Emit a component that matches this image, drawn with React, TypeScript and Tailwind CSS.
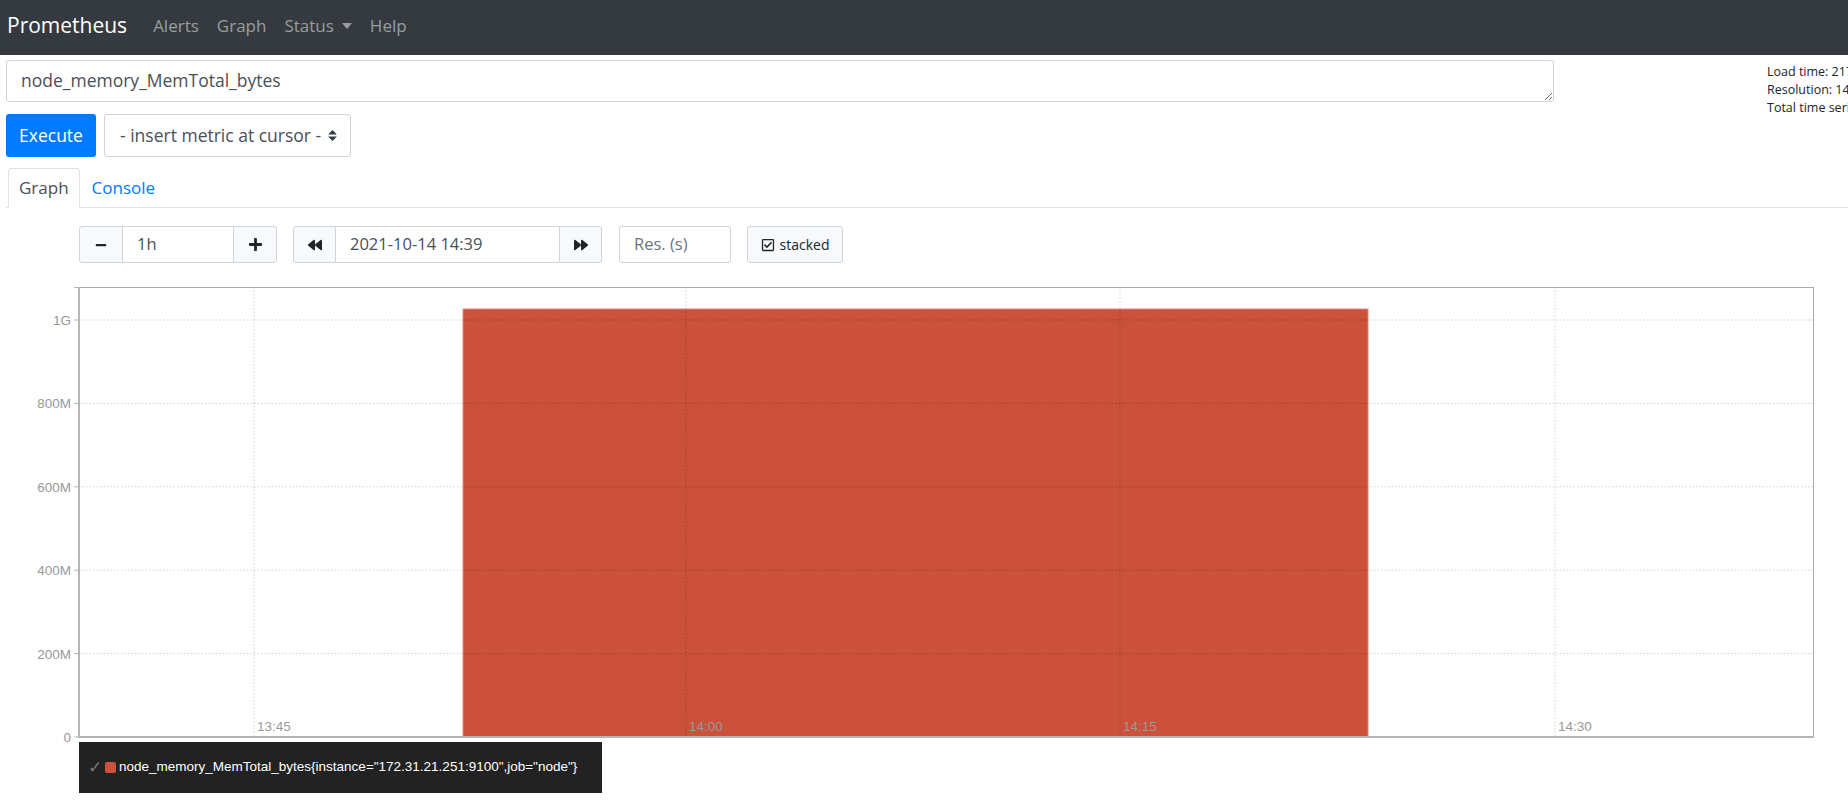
import { FaMinus, FaPlus, FaBackward, FaForward, FaRegCheckSquare } from "react-icons/fa"

const yTicks = [
  { label: "0", y: 457 },
  { label: "200M", y: 373.6 },
  { label: "400M", y: 290.2 },
  { label: "600M", y: 206.8 },
  { label: "800M", y: 123.4 },
  { label: "1G", y: 40 },
]

const xTicks = [
  { label: "13:45", x: 248 },
  { label: "14:00", x: 680 },
  { label: "14:15", x: 1114 },
  { label: "14:30", x: 1549 },
]

function Chart() {
  // svg origin sits at page (7, 280)
  return (
    <svg width="1820" height="462" className="block" style={{ fontFamily: "'Liberation Sans', Arial, sans-serif" }}>
      <rect x="457" y="29" width="905" height="428" fill="#cb513a" stroke="#dd8a78" strokeWidth="1" />
      {yTicks.slice(1).map((t) => (
        <line key={t.label} x1="73" x2="1807" y1={t.y} y2={t.y} stroke="#000" strokeOpacity="0.18" strokeDasharray="1.5 2" />
      ))}
      {xTicks.map((t) => (
        <line key={t.label} x1={t.x} x2={t.x} y1="7" y2="457" stroke="#000" strokeOpacity="0.18" strokeDasharray="1.5 2" />
      ))}
      <line x1="73" x2="1807" y1="7.5" y2="7.5" stroke="#aaa" />
      <line x1="1807.5" x2="1807.5" y1="7" y2="457" stroke="#aaa" />
      <line x1="73" x2="73" y1="7" y2="458" stroke="#b5b5b5" strokeWidth="2" />
      <line x1="73" x2="1808" y1="457" y2="457" stroke="#b5b5b5" strokeWidth="2" />
      <line x1="68" x2="73" y1="7.5" y2="7.5" stroke="#b5b5b5" />
      {yTicks.map((t) => (
        <g key={t.label}>
          <line x1="68" x2="73" y1={t.y} y2={t.y} stroke="#b5b5b5" />
          <text x="65" y={t.y + 5} textAnchor="end" fontSize="13.5" fill="#999">
            {t.label}
          </text>
        </g>
      ))}
      {xTicks.map((t) => (
        <text key={t.label} x={t.x + 3} y="451" fontSize="13.5" fill="#999">
          {t.label}
        </text>
      ))}
    </svg>
  )
}

function SortArrows() {
  return (
    <svg width="9" height="11" viewBox="0 0 4 5" className="shrink-0">
      <path d="M2 0L0 2h4zm0 5L0 3h4z" fill="#343a40" />
    </svg>
  )
}

export default function App() {
  return (
    <div className="w-[1848px] h-[808px] overflow-hidden bg-white text-[#212529] font-['Open_Sans',sans-serif]">
      <nav className="h-[55px] bg-[#343a40] flex items-center pl-[7px] pb-[4px]">
        <span className="text-[21px] text-white mr-[17px]">Prometheus</span>
        <a className="px-[9px] text-[17px] text-white/50">Alerts</a>
        <a className="px-[9px] text-[17px] text-white/50">Graph</a>
        <a className="px-[9px] text-[17px] text-white/50 flex items-center">
          Status
          <span className="ml-[8px] w-0 h-0 border-l-[5px] border-r-[5px] border-t-[6px] border-l-transparent border-r-transparent border-t-white/50" />
        </a>
        <a className="px-[9px] text-[17px] text-white/50">Help</a>
      </nav>

      <div className="flex">
        <div className="w-[1548px] ml-[6px] shrink-0">
          <textarea
            defaultValue="node_memory_MemTotal_bytes"
            className="block mt-[5px] w-full h-[42px] border border-[#ced4da] rounded-[3px] px-[14px] py-[6px] text-[17.5px] leading-[27px] text-[#495057] outline-none resize-y"
          />
          <div className="flex mt-[12px] gap-[8px]">
            <button className="h-[43px] w-[90px] bg-[#007bff] text-white text-[17.5px] rounded-[3px]">Execute</button>
            <div className="h-[43px] w-[247px] border border-[#ced4da] rounded-[3px] flex items-center justify-between pl-[15px] pr-[13px] text-[17.5px] text-[#495057]">
              <span>- insert metric at cursor -</span>
              <SortArrows />
            </div>
          </div>
        </div>
        <div className="ml-[213px] mt-[8px] text-[12.5px] leading-[18px] whitespace-nowrap">
          <div>Load time: 217ms</div>
          <div>Resolution: 14s</div>
          <div>Total time series: 1</div>
        </div>
      </div>

      <div className="ml-[6px] mt-[11px]">
        <div className="flex border-b border-[#dee2e6] h-[40px]">
          <div className="ml-[2px] h-[40px] -mb-px px-[10px] border border-[#dee2e6] border-b-white rounded-t-[4px] bg-white flex items-center text-[17px] text-[#495057]">
            Graph
          </div>
          <div className="px-[12px] flex items-center text-[17px] text-[#007bff]">Console</div>
        </div>

        <div className="border-b border-[#dee2e6] h-[592px]">
          <div className="flex items-center ml-[73px] mt-[18px] h-[37px] text-[16.5px] text-[#495057]">
            <div className="flex h-full">
              <button className="w-[44px] h-full bg-[#f8f9fa] border border-[#ced4da] rounded-l-[3px] flex items-center justify-center text-[#212529]">
                <FaMinus size={12} />
              </button>
              <div className="w-[110px] h-full border-y border-[#ced4da] flex items-center pl-[14px]">1h</div>
              <button className="w-[44px] h-full bg-[#f8f9fa] border border-[#ced4da] rounded-r-[3px] flex items-center justify-center text-[#212529]">
                <FaPlus size={15} />
              </button>
            </div>
            <div className="flex h-full ml-[16px]">
              <button className="w-[43px] h-full bg-[#f8f9fa] border border-[#ced4da] rounded-l-[3px] flex items-center justify-center text-[#212529]">
                <FaBackward size={14} />
              </button>
              <div className="w-[223px] h-full border-y border-[#ced4da] flex items-center pl-[14px]">2021-10-14 14:39</div>
              <button className="w-[43px] h-full bg-[#f8f9fa] border border-[#ced4da] rounded-r-[3px] flex items-center justify-center text-[#212529]">
                <FaForward size={14} />
              </button>
            </div>
            <div className="ml-[17px] w-[112px] h-full border border-[#ced4da] rounded-[3px] flex items-center pl-[14px] text-[#6c757d]">
              Res. (s)
            </div>
            <button className="ml-[16px] w-[96px] h-full bg-[#f8f9fa] border border-[#ced4da] rounded-[3px] flex items-center justify-center gap-[5px] text-[14px] text-[#212529]">
              <FaRegCheckSquare size={14} />
              stacked
            </button>
          </div>

          <div className="mt-[17px]">
            <Chart />
          </div>

          <div className="ml-[73px] w-[523px] h-[51px] bg-[#222] flex items-center pl-[9px] text-white text-[13.5px] font-['Liberation_Sans',Arial,sans-serif] whitespace-nowrap">
            <span className="text-[#777] text-[17px] mr-[3px]">✓</span>
            <span className="w-[11px] h-[11px] rounded-[2px] bg-[#cb513a] mr-[3px]" />
            {'node_memory_MemTotal_bytes{instance="172.31.21.251:9100",job="node"}'}
          </div>
        </div>
      </div>

      <div className="flex justify-end">
        <span className="mr-[-30px] -mt-[4px] text-[17.5px] leading-[27px] text-[#007bff] whitespace-nowrap w-[128px]">Remove Panel</span>
      </div>
    </div>
  )
}
